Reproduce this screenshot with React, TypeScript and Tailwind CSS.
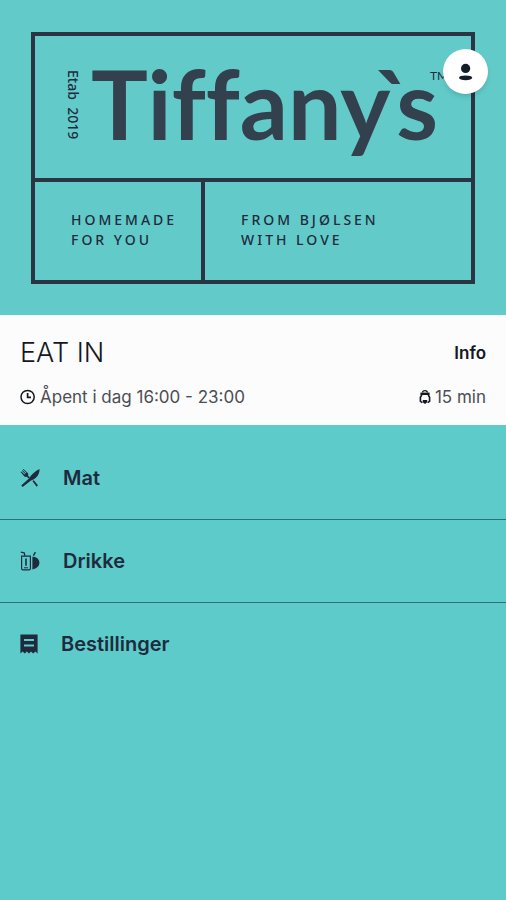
import React from "react";

interface IconProps {
  className?: string;
}

const UserIcon = ({ className }: IconProps) => (
  <svg viewBox="0 0 16 20" className={className} fill="currentColor" aria-hidden="true">
    <circle cx="7.6" cy="6.4" r="4.6" />
    <ellipse cx="7.6" cy="15.8" rx="6.6" ry="2.4" />
  </svg>
);

const ClockIcon = ({ className }: IconProps) => (
  <svg viewBox="0 0 16 16" className={className} fill="none" stroke="currentColor" aria-hidden="true">
    <circle cx="7.6" cy="8" r="6.6" strokeWidth="1.5" />
    <path d="M7.6 4V8.4H11" strokeWidth="1.7" />
  </svg>
);

const PrepTimeIcon = ({ className }: IconProps) => (
  <svg viewBox="0 0 12 16" className={className} fill="none" stroke="currentColor" aria-hidden="true">
    <path d="M3.6 3.6C3.6 1 8.4 1 8.4 3.6" strokeWidth="1.4" />
    <path d="M1.4 4.8H10.6" strokeWidth="2.4" />
    <path d="M2.8 6L1.4 8.2V12.4L3.4 13.6M9.2 6L10.6 8.2V12.4L8.6 13.6" strokeWidth="1.6" />
    <path d="M3.8 11H8.2V13.2L6 15L3.8 13.2Z" fill="currentColor" stroke="none" />
  </svg>
);

const FoodIcon = ({ className }: IconProps) => (
  <svg viewBox="0 0 20 20" className={className} fill="currentColor" aria-hidden="true">
    <path d="M19.6 1.2C17 1.6 11.4 6.4 9.2 10.2L1.2 17.6L2.6 19L11 12.4C14.6 11.8 19.6 7.6 19.6 1.2Z" />
    <path d="M3.4 1L7.6 4.8C8.6 6 8.4 7.4 7.6 8.2C6.6 9.2 5.2 9.2 4.2 8.2L0.6 4L1.4 3.4L4.6 6.6L5.2 6L2 2.8L2.6 2.2L5.8 5.4L6.4 4.8L2.8 1.6Z" />
    <path d="M6.6 8.6L8 7.4L9.8 9.4L8.6 10.4ZM12.4 13L13.8 12.2L18 17.2L16.6 18.8Z" />
  </svg>
);

const DrinkIcon = ({ className }: IconProps) => (
  <svg viewBox="0 0 20 20" className={className} fill="none" stroke="currentColor" aria-hidden="true">
    <path d="M0.8 1.2L4.2 1.8L5 5" strokeWidth="1.2" />
    <path d="M1.6 5.2H10.4V17.4Q10.4 18.8 9 18.8H3Q1.6 18.8 1.6 17.4Z" strokeWidth="1.2" />
    <path d="M6 7.6V14.8" strokeWidth="1.6" />
    <path d="M4 16.8H8" strokeWidth="1" />
    <path d="M13.4 4.6L15.4 1.2" strokeWidth="1.4" />
    <path d="M12.4 5.8C17 5.8 19.4 8.4 19.4 12C19.4 15 16.4 17.8 12.4 18.4Z" fill="currentColor" stroke="none" />
  </svg>
);

const ReceiptIcon = ({ className }: IconProps) => (
  <svg viewBox="0 0 18 20" className={className} fill="currentColor" aria-hidden="true">
    <path
      fillRule="evenodd"
      d="M0.4 0.4H17.6V19.6L15.4 17.6L13.2 19.6L11 17.6L9 19.6L6.8 17.6L4.8 19.6L2.6 17.6L0.4 19.6ZM4 5V7H14V5ZM4 10.6V12.6H14V10.6Z"
    />
  </svg>
);

const menuItems = [
  { label: "Mat", icon: <FoodIcon className="size-5" /> },
  { label: "Drikke", icon: <DrinkIcon className="size-5" /> },
  { label: "Bestillinger", icon: <ReceiptIcon className="h-5 w-[18px]" /> },
];

const Logo = () => (
  <div className="border-4 border-[#2b3442]">
    <div className="flex h-[142px] items-start pl-7">
      <p className="mt-[34px] font-['Noto_Sans',sans-serif] text-sm font-medium leading-5 whitespace-pre [writing-mode:vertical-rl]">
        Etab  2019
      </p>
      <h1 className="ml-2 font-['Lato',sans-serif] text-[95px] font-bold leading-[134px] text-[#33404d] [font-variant-ligatures:none]">
        Tiffany<span className="-mx-4">`</span>s
      </h1>
      <span className="-ml-2 mt-7 font-['Lato',sans-serif] text-xs leading-6">TM</span>
    </div>
    <div className="flex h-[102px] border-t-4 border-[#2b3442] font-['Noto_Sans',sans-serif] text-sm font-medium leading-5 tracking-[3px]">
      <p className="w-[170px] border-r-4 border-[#2b3442] pl-9 pt-7">
        HOMEMADE
        <br />
        FOR YOU
      </p>
      <p className="flex-1 pl-9 pt-7">
        FROM BJØLSEN
        <br />
        WITH LOVE
      </p>
    </div>
  </div>
);

const App = () => {
  return (
    <div className="min-h-screen bg-[#5dcbca] font-['Inter',sans-serif] text-[#1f2b3d]">
      <header className="relative bg-[#62cbc9] px-[31px] pb-[31px] pt-8">
        <Logo />
        <button
          type="button"
          aria-label="Profil"
          className="absolute right-[18px] top-[49px] flex size-[45px] items-center justify-center rounded-full bg-white text-[#141d28] shadow-md"
        >
          <UserIcon className="h-5 w-4" />
        </button>
      </header>

      <section className="bg-[#fcfcfc] px-5 pb-4 pt-5 text-[#15181f]">
        <div className="flex items-center justify-between">
          <h2 className="text-[27px] font-light leading-9">EAT IN</h2>
          <button type="button" className="text-[17px] font-semibold leading-9">
            Info
          </button>
        </div>
        <div className="mt-[14px] flex items-center justify-between text-[17px] leading-6 text-[#4a4e55]">
          <p className="flex items-center gap-1">
            <ClockIcon className="size-4 text-[#15181f]" />
            Åpent i dag 16:00 - 23:00
          </p>
          <p className="flex items-center gap-1">
            <PrepTimeIcon className="h-4 w-3 text-[#15181f]" />
            15 min
          </p>
        </div>
      </section>

      <nav className="pt-3">
        <ul>
          {menuItems.map((item) => (
            <li key={item.label} className="border-b border-[#2f7078] last:border-b-0">
              <a href="#" className="flex h-[82px] items-center gap-[23px] px-5 text-xl font-semibold">
                {item.icon}
                {item.label}
              </a>
            </li>
          ))}
        </ul>
      </nav>
    </div>
  );
};

export default App;
